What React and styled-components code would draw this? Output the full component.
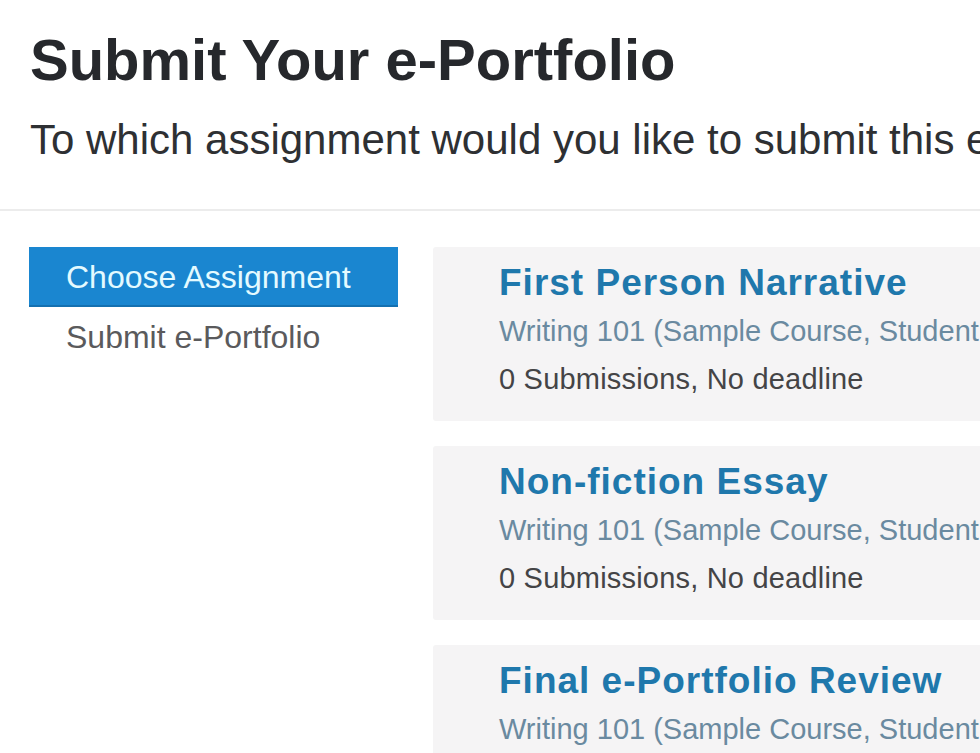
import styled, { createGlobalStyle } from "styled-components";

const GlobalStyle = createGlobalStyle`
  html, body {
    margin: 0;
    padding: 0;
    background: #ffffff;
    font-family: "Liberation Sans", Arial, sans-serif;
    overflow: hidden;
  }
`;

const Page = styled.div`
  width: 980px;
  height: 753px;
  overflow: hidden;
  background: #ffffff;
`;

const Header = styled.header`
  padding: 31px 0 48px 30px;
  border-bottom: 2px solid #ececec;
  white-space: nowrap;
`;

const Title = styled.h1`
  margin: 0;
  font-size: 58px;
  line-height: 58px;
  font-weight: bold;
  color: #26282c;
`;

const Subtitle = styled.p`
  margin: 30px 0 0;
  font-size: 42px;
  line-height: 42px;
  color: #2e3033;
`;

const Body = styled.div`
  display: flex;
  align-items: flex-start;
  gap: 35px;
  padding: 36px 0 0 29px;
`;

const SideNav = styled.nav`
  flex: 0 0 369px;
  display: flex;
  flex-direction: column;
`;

const NavItem = styled.div`
  height: 60px;
  line-height: 60px;
  padding-left: 37px;
  font-size: 32px;
  white-space: nowrap;
  color: ${(p) => (p.active ? "#e4faff" : "#5a5a5c")};
  background: ${(p) => (p.active ? "#1a86d0" : "transparent")};
  box-shadow: ${(p) => (p.active ? "inset 0 -2px 0 #1470b0" : "none")};
`;

const CardList = styled.div`
  flex: 1;
  display: flex;
  flex-direction: column;
  gap: 25px;
`;

const Card = styled.div`
  background: #f5f4f5;
  border-radius: 3px 0 0 3px;
  padding: 12px 0 18px 66px;
  white-space: nowrap;
  overflow: hidden;
`;

const CardTitle = styled.div`
  font-size: 37px;
  line-height: 48px;
  font-weight: bold;
  letter-spacing: 1px;
  color: #1f78ac;
`;

const Course = styled.div`
  font-size: 29px;
  line-height: 48px;
  color: #6a8aa0;
`;

const Meta = styled.div`
  font-size: 29px;
  line-height: 48px;
  letter-spacing: 0.2px;
  color: #444446;
`;

const assignments = [
  { title: "First Person Narrative", subs: 0 },
  { title: "Non-fiction Essay", subs: 0 },
  { title: "Final e-Portfolio Review", subs: 0 },
];

export default function App() {
  return (
    <Page>
      <GlobalStyle />
      <Header>
        <Title>Submit Your e-Portfolio</Title>
        <Subtitle>To which assignment would you like to submit this e-Portfolio?</Subtitle>
      </Header>
      <Body>
        <SideNav>
          <NavItem active>Choose Assignment</NavItem>
          <NavItem>Submit e-Portfolio</NavItem>
        </SideNav>
        <CardList>
          {assignments.map((a) => (
            <Card key={a.title}>
              <CardTitle>{a.title}</CardTitle>
              <Course>Writing 101 (Sample Course, Student View)</Course>
              <Meta>{a.subs} Submissions, No deadline</Meta>
            </Card>
          ))}
        </CardList>
      </Body>
    </Page>
  );
}
